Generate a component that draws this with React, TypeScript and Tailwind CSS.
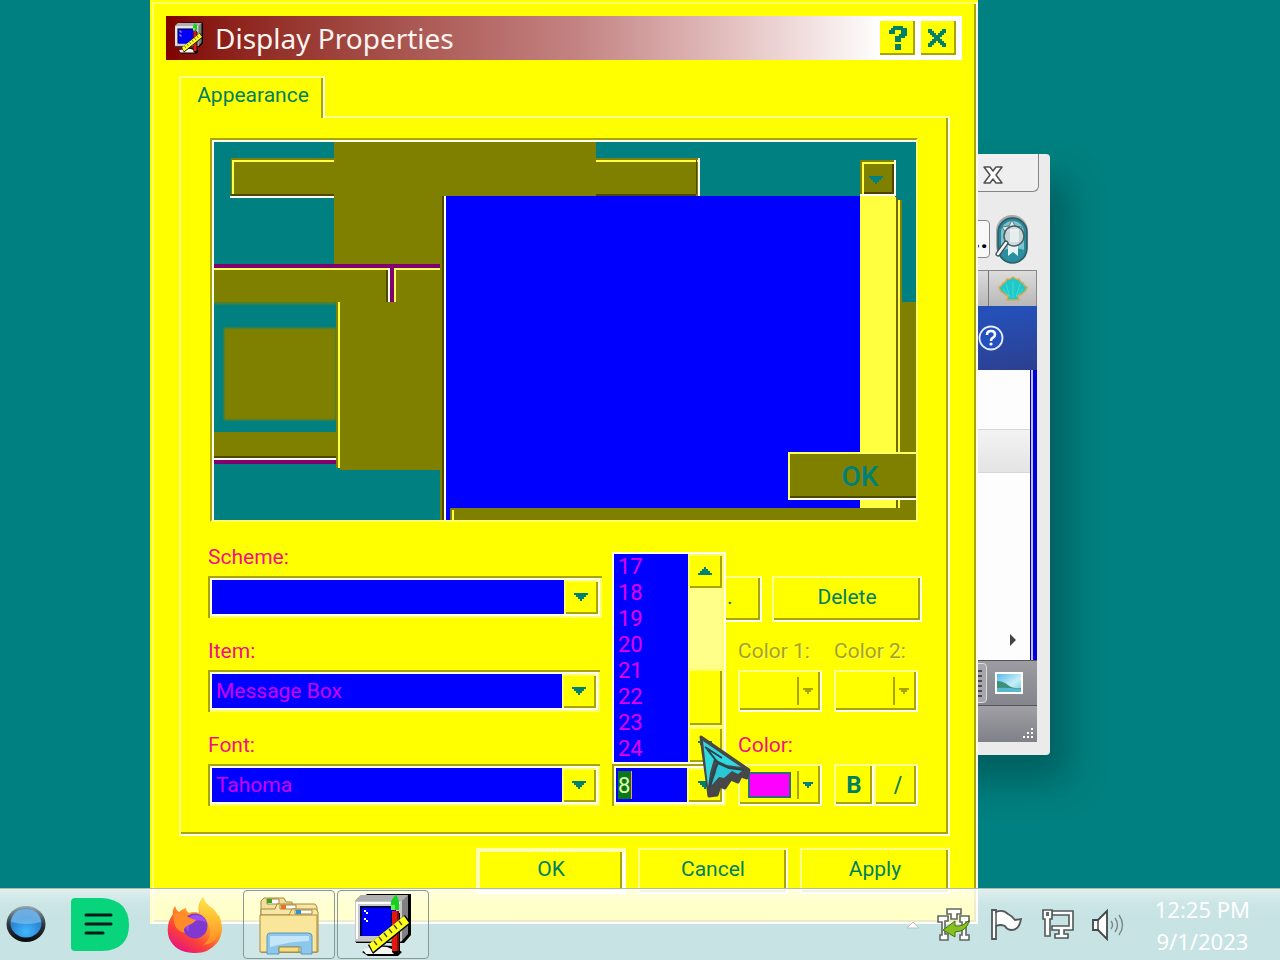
import React from "react";

const RAISED =
  "bg-[#ffff00] shadow-[inset_2px_2px_0_#ffff8c,inset_-2px_-2px_0_#fffff0,inset_-4px_-4px_0_#a8a400]";
const SUNKEN =
  "bg-[#ffff00] p-1 shadow-[inset_2px_2px_0_#a8a400,inset_-2px_-2px_0_#ffff66,inset_4px_4px_0_#fffff0,inset_-4px_-4px_0_#fffff0]";
const KNOB =
  "flex items-center justify-center bg-[#ffff00] shadow-[inset_2px_2px_0_#ffff66,inset_-2px_-2px_0_#a8a400]";
const LABEL = "block h-7 text-[21px] leading-[30px] text-[#f0108c]";

function Triangle({ up = false }: { up?: boolean }) {
  return (
    <svg width="14" height="8" viewBox="0 0 14 8" shapeRendering="crispEdges" aria-hidden="true">
      <path
        d={up ? "M6 0h2v2h2v2h2v2h2v2H0V6h2V4h2V2h2z" : "M0 0h14v2h-2v2h-2v2H8v2H6V6H4V4H2V2H0z"}
        fill="#008070"
      />
    </svg>
  );
}

function Combo({ id, label, value, list }: { id: string; label: string; value: string; list: string[] }) {
  return (
    <div className="min-w-0">
      <label htmlFor={id} className={LABEL}>
        {label}
      </label>
      <div className={`mt-[6px] flex h-[42px] ${SUNKEN}`}>
        <select
          id={id}
          defaultValue={value}
          className="h-full min-w-0 flex-1 appearance-none rounded-none bg-[#0000ff] pl-1 text-[21px] leading-8 text-[#d000ff] outline-none"
        >
          {list.map((o) => (
            <option key={o} value={o}>
              {o}
            </option>
          ))}
        </select>
        <span className={`w-[34px] ${KNOB}`}>
          <Triangle />
        </span>
      </div>
    </div>
  );
}

function ColorPick({ label, color }: { label: string; color?: string }) {
  const dim = !color;
  return (
    <div>
      <span
        className={`block h-7 text-[21px] leading-[30px] whitespace-nowrap ${
          dim ? "text-[#a8a400] [text-shadow:1px_1px_0_#ffff8c]" : "text-[#f0108c]"
        }`}
      >
        {label}
      </span>
      <button
        aria-label={label}
        disabled={dim}
        className={`mt-[6px] flex h-[42px] w-full items-center pr-[5px] pl-[10px] ${RAISED}`}
      >
        <span className={dim ? "h-[26px] flex-1" : "h-[26px] flex-1 border-2 border-[#2c6c7c] bg-[#ff00ff]"} />
        <span className="mr-1 ml-[6px] h-7 w-[2px] bg-[#a8a400]" />
        <svg width="10" height="6" viewBox="0 0 10 6" className="mr-1" aria-hidden="true">
          <path d="M0 0h10v2H8v2H6v2H4V4H2V2H0z" fill={dim ? "#a8a400" : "#008070"} />
        </svg>
      </button>
    </div>
  );
}

function MonitorIcon({ className }: { className: string }) {
  return (
    <svg className={className} viewBox="0 0 58 64" aria-hidden="true">
      <path d="M7 6l6-5h44v41l-7 8H2V8z" fill="#000" />
      <path d="M1 8l6-6h47v39l-7 8H1z" fill="#808080" />
      <path d="M1 8l6-6h47l-6 6z" fill="#b0b0b0" />
      <path d="M1 8h47v40H1z" fill="#c8c8c8" />
      <path d="M2 9h44v2H4v35H2z" fill="#fff" />
      <path d="M6 13h36v30H6z" fill="#000050" />
      <path d="M8 15h34v28H8z" fill="#0000f8" />
      <path d="M10 17h2v2h-2zM12 19h2v2h-2zM10 25h2v2h-2zM12 27h2v2h-2z" fill="#fff" />
      <path d="M12 57q10-6 26-4l10 6-4 4H14l-6-4z" fill="#000" />
      <path d="M9 57q10-5 24-3l12 5-4 2H12z" fill="#f4f4f4" />
      <path d="M37 20h9v38l-4 5-4-4z" fill="#000" />
      <path d="M38 18h7v40h-7z" fill="#e01810" />
      <path d="M43 18h2v40h-2z" fill="#801008" />
      <path d="M37 17V8l5-7 3 7v9z" fill="#18d020" />
      <path d="M37 12h4v5h-4z" fill="#68f050" />
      <path d="M19 61l-5-9 37-30 6 8z" fill="#000" />
      <path d="M19 59l-4-8 35-28 5 7z" fill="#ffff20" />
      <path d="M20 48l3 4M25 44l3 4M30 40l3 4M35 36l3 4M40 32l3 4M45 28l3 4" stroke="#504800" strokeWidth="1.4" />
    </svg>
  );
}

function Preview() {
  return (
    <svg
      viewBox="214 142 702 378"
      preserveAspectRatio="xMinYMin slice"
      className="block h-[378px] w-full"
      role="img"
      aria-label="Scheme preview"
    >
      <g shapeRendering="crispEdges">
        <path d="M214 142h702v378H214z" fill="#008080" />
        <path d="M231 158h468v38H231z" fill="#808000" />
        <path d="M232 160h466v2H234v32h-2z" fill="#ffff40" />
        <path d="M231 194h466v-34h-1v36H231z" fill="#504800" />
        <path d="M230 196h468v-38h2v40H230z" fill="#fffff0" />
        <path d="M334 142h262v54H444v324h-4V470H340V302H214V266h120z" fill="#808000" />
        <path d="M214 264h226v4H214z" fill="#800070" />
        <path d="M214 268h226v2H214z" fill="#ffff60" />
        <path d="M386 270h2v32h-2z" fill="#504800" />
        <path d="M388 268h2v34h-2z" fill="#fffff0" />
        <path d="M390 268h4v34h-4z" fill="#800070" />
        <path d="M394 268h2v34h-2z" fill="#ffff60" />
        <path d="M336 302h4v166h-4z" fill="#808000" />
        <path d="M214 432h122v24H214z" fill="#808000" />
        <path d="M214 456h122v2H214z" fill="#504800" />
        <path d="M214 458h122v2H214z" fill="#fffff0" />
        <path d="M214 460h122v4H214z" fill="#800070" />
        <path d="M338 302h2v166h-2z" fill="#ffff40" />
        <path d="M442 196h2v324h-2z" fill="#504800" />
        <path d="M444 196h2v324h-2z" fill="#fffff0" />
        <path d="M446 196h414v312h-408v12h-6z" fill="#0000ff" />
        <path d="M450 508h466v12H450z" fill="#808000" />
        <path d="M452 510h2v10h-2z" fill="#ffff40" />
        <path d="M898 200h4v308h-4zM902 302h14v218h-14z" fill="#808000" />
        <path d="M860 196h34l2 2v310h-36z" fill="#ffff40" />
        <path d="M896 198h2v310h-2z" fill="#706800" />
        <path d="M898 200h2v308h-2z" fill="#ffff40" />
        <path d="M860 160h35v36h-35z" fill="#808000" />
        <path d="M862 162h32v2h-30v30h-2z" fill="#ffff40" />
        <path d="M892 164h2v30h-30v-2h28z" fill="#504000" />
        <path d="M894 160h2v36h-36v-2h34z" fill="#fffff0" />
        <path d="M869 176h14v2h-2v2h-2v2h-2v2h-2v-2h-2v-2h-2v-2h-2z" fill="#008080" />
        <path d="M788 452h128v48H788z" fill="#808000" />
        <path d="M788 452h128v2H790v46h-2z" fill="#ffff60" />
        <path d="M790 496h126v2H790z" fill="#504800" />
        <path d="M788 498h128v2H788z" fill="#fffff0" />
      </g>
      <g filter="url(#soft)">
        <path d="M214 302h122v2H214zM224 328h112v92H224z" fill="#808000" />
      </g>
      <defs>
        <filter id="soft">
          <feGaussianBlur stdDeviation="1" />
        </filter>
      </defs>
      <text
        x="860"
        y="486"
        textAnchor="middle"
        fill="#008078"
        fontSize="28"
        fontWeight="500"
        fontFamily="Roboto, sans-serif"
      >
        OK
      </text>
    </svg>
  );
}

function BrowserWindow() {
  return (
    <section
      aria-label="Browser"
      className="absolute top-[154px] left-[650px] flex w-[400px] flex-col rounded-tr rounded-b-sm bg-[#ebebeb] pr-[13px] pb-[13px] shadow-[18px_26px_36px_rgba(0,50,50,0.42)]"
    >
      <div className="flex h-[38px] justify-end">
        <button
          aria-label="Close window"
          className="-mr-[2px] flex w-[90px] items-center justify-end rounded-br-md border-r border-b border-[#858585] bg-[#efefef] pt-1 pr-[35px]"
        >
          <svg width="20" height="18" viewBox="0 0 20 18" aria-hidden="true">
            <path
              d="M1 1h6l3 4 3-4h6l-6 8 6 8h-6l-3-4-3 4H1l6-8z"
              fill="#fff"
              stroke="#505050"
              strokeWidth="1.5"
              strokeLinejoin="round"
            />
          </svg>
        </button>
      </div>
      <div className="flex h-[78px] items-center justify-end gap-[5px] pt-4 pr-2">
        <div className="flex h-[38px] w-[80px] items-end justify-end rounded-r border border-[#888] bg-[#f8f8f8] pr-[1px] pb-[6px] text-[26px] leading-6 font-bold text-black">
          ...
        </div>
        <svg width="34" height="50" viewBox="0 0 34 50" aria-hidden="true">
          <rect x="1" y="1" width="32" height="46" rx="16" fill="#a8a8a8" />
          <rect x="3" y="4" width="29" height="45" rx="14.5" fill="#2b8797" stroke="#295b68" strokeWidth="1.5" />
          <rect x="6" y="7" width="23" height="39" rx="11.5" fill="#79c4ce" />
          <path d="M6 37q12-5 23-1-2 11-11 11-9-1-12-10z" fill="#2b8fa0" />
          <path d="M17 6l3 6 7 1-4 6H11l-4-6 7-1z" fill="#e0f0f0" stroke="#5d7780" />
          <path d="M13 27h10v15l-5-4-5 4z" fill="#e4f4f4" />
          <circle cx="19" cy="22" r="10" fill="#cdd8da" fillOpacity=".9" stroke="#4b5c62" strokeWidth="1.5" />
          <path d="M15 15h9v13h-9z" fill="#f4f6f6" fillOpacity=".7" />
          <path d="M11 29L3 40" stroke="#3e4c52" strokeWidth="5" strokeLinecap="round" />
          <path d="M11 29L3 40" stroke="#f4f4f4" strokeWidth="2.5" strokeLinecap="round" />
        </svg>
      </div>
      <div className="flex h-9 justify-end border-t border-r border-[#888] bg-linear-to-b from-[#dcdcdc] to-[#b8b8b8]">
        <div className="flex w-12 items-center justify-center border-l border-[#777]">
          <svg width="30" height="26" viewBox="0 0 30 26" aria-hidden="true">
            <path
              d="M9 24l1-4Q1 16 1 11q3-1 4-4 2 0 4-4 3 1 6-2 3 3 6 2 2 4 4 4 1 3 4 4 0 5-9 9l1 4z"
              fill="#20c8c8"
              stroke="#e0a850"
              strokeWidth="1.5"
            />
            <path d="M15 22V5M12 21L8 8M18 21l4-13M11 20l-6-7M19 20l6-7" stroke="#40dcd8" />
          </svg>
        </div>
      </div>
      <div className="flex h-[64px] items-center justify-end bg-linear-to-br from-[#1c3f9c] via-[#2450b8] to-[#2c3f90] pr-[33px]">
        <svg width="26" height="26" viewBox="0 0 26 26" aria-hidden="true">
          <circle cx="13" cy="13" r="11.5" fill="#2450c0" stroke="#e8ecff" strokeWidth="1.8" />
          <path d="M9 10q0-4 4-4t4 3.500q0 2-2 3.200-2 1-2 3.300" fill="none" stroke="#fff" strokeWidth="2.600" />
          <circle cx="13" cy="19" r="1.600" fill="#fff" />
        </svg>
      </div>
      <div className="flex h-[290px] flex-col border-r-4 border-[#0000d8] bg-[#fdfdfd]">
        <div className="flex h-full flex-col border-r-2 border-[#c0c0ff]">
          <div className="h-full border-r border-[#0000a0]">
            <div className="mt-[59px] h-11 border-y border-[#d8d8d8] bg-linear-to-b from-[#f3f3f3] to-[#e4e4e4]" />
            <div className="flex justify-end pt-[161px] pr-[14px]">
              <svg width="6" height="12" viewBox="0 0 6 12" aria-hidden="true">
                <path d="M0 0l6 6-6 6z" fill="#444" />
              </svg>
            </div>
          </div>
        </div>
      </div>
      <div className="flex h-[46px] items-center justify-end gap-2 border-y border-[#555] bg-linear-to-b from-[#9c9ca2] to-[#85858d] pr-[14px]">
        <div className="flex h-10 w-5 flex-col justify-center gap-[3px] rounded-r border border-[#ddd] bg-[#a6a6ab] pr-1">
          {[0, 1, 2, 3, 4, 5].map((n) => (
            <span key={n} className="h-[2px] bg-[#4a4a50]" />
          ))}
        </div>
        <svg width="28" height="22" viewBox="0 0 28 22" aria-hidden="true">
          <defs>
            <linearGradient id="sky" x1="0" y1="0" x2="1" y2="1">
              <stop offset="0" stopColor="#58b8ec" />
              <stop offset="0.6" stopColor="#c8f0f8" />
              <stop offset="1" stopColor="#70c8d8" />
            </linearGradient>
          </defs>
          <path d="M0 0h28v22H0z" fill="#fff" />
          <path d="M2 2h24v18H2z" fill="url(#sky)" />
          <path d="M2 9q6 0 11 4t13 3v1H2z" fill="#3c9078" />
          <path d="M2 16q8-1 24 1v3H2z" fill="#58b8d0" />
        </svg>
      </div>
      <div className="flex h-9 items-end justify-end bg-linear-to-b from-[#a0a0a6] to-[#808088] p-[3px]">
        <svg width="12" height="12" viewBox="0 0 12 12" fill="#fff" aria-hidden="true">
          <path d="M9 1h2v2H9zM9 5h2v2H9zM5 5h2v2H5zM9 9h2v2H9zM5 9h2v2H5zM1 9h2v2H1z" />
        </svg>
      </div>
    </section>
  );
}

function SizeField() {
  return (
    <div className="relative flex flex-col justify-end">
      <div className={`flex h-[42px] ${SUNKEN}`}>
        <div className="flex min-w-0 flex-1 items-center bg-[#0000ff] pl-[2px]">
          <input
            aria-label="Size"
            defaultValue="8"
            className="h-7 w-[14px] border-r border-[#ff9090] bg-[#087818] text-[22px] text-[#e0ffb0] outline-none"
          />
        </div>
        <button aria-label="Show sizes" className={`w-[35px] ${KNOB}`}>
          <Triangle />
        </button>
      </div>
      <div className="absolute bottom-[42px] left-0 z-10 flex w-full border-2 border-[#fffff0] bg-[#ffff00]">
        <ul className="flex-1 bg-[#0000ff] pl-1 text-[22px] leading-[26px] text-[#e000f4]">
          {[17, 18, 19, 20, 21, 22, 23, 24].map((n) => (
            <li key={n}>{n}</li>
          ))}
        </ul>
        <div className="flex w-9 flex-col border-r-2 border-[#ffff66] bg-[#ffff8a]">
          <button aria-label="Scroll up" className={`h-[34px] ${KNOB}`}>
            <Triangle up />
          </button>
          <div className="flex-1" />
          <div className={`h-[56px] ${KNOB}`} />
          <button aria-label="Scroll down" className={`mt-[2px] h-[35px] ${KNOB}`}>
            <Triangle />
          </button>
        </div>
      </div>
      <svg
        width="54"
        height="64"
        viewBox="0 0 54 64"
        className="pointer-events-none absolute bottom-[7px] left-[87px] z-20"
        aria-hidden="true"
      >
        <path
          d="M2 2l48 33-2 8-6-2-3 6-7-3-6 9-5-2-3 9-8 1z"
          fill="#48484a"
          stroke="#484848"
          strokeWidth="3"
          strokeLinejoin="round"
        />
        <path d="M4 6l38 26-14-2-13-6-4 14-2 14z" fill="#30d8e0" />
        <path d="M18 28l11 5 15 2-5 4-6-3-8 7-5-1-8 9 5-14z" fill="#28c8d4" />
        <path d="M8 14l11 14-5 11-3 13M19 28l11 5 15 2M6 12l17 11" fill="none" stroke="#2c4448" strokeWidth="2" />
      </svg>
    </div>
  );
}

function DisplayDialog() {
  return (
    <section
      aria-label="Display Properties"
      className="absolute top-0 left-[150px] w-[828px] bg-[#ffff00] p-4 pb-[30px] shadow-[inset_2px_2px_0_#ffff00,inset_-2px_-2px_0_#fffff0,inset_4px_4px_0_#ffff66,inset_-4px_-4px_0_#a8a400]"
    >
      <header className="flex h-11 items-center bg-linear-to-r from-[#800000] via-[#c48484] via-52% to-white to-90% pr-[6px] pl-2">
        <MonitorIcon className="h-8 w-[30px]" />
        <h1 className="ml-[11px] flex-1 font-['Noto_Sans',sans-serif] text-[28px] leading-10 text-[#fff4f0]">
          Display Properties
        </h1>
        <button
          aria-label="Help"
          className="mr-[6px] flex h-[34px] w-[35px] items-center justify-center bg-[#ffff00] shadow-[inset_-2px_-2px_0_#a8a400]"
        >
          <svg width="18" height="24" viewBox="0 0 18 24" shapeRendering="crispEdges" aria-hidden="true">
            <path d="M4 0h10v2h4v8h-2v2h-4v4H6v-6h4V8h2V4H6v4H0V4h2V2h2zM6 18h6v6H6z" fill="#008068" />
          </svg>
        </button>
        <button
          aria-label="Close"
          className="flex h-[34px] w-[35px] items-center justify-center bg-[#ffff00] pr-1 shadow-[inset_-2px_-2px_0_#a8a400]"
        >
          <svg width="18" height="18" viewBox="0 0 18 18" shapeRendering="crispEdges" aria-hidden="true">
            <path
              d="M0 0h4v2h2v2h2v2h2V4h2V2h2V0h4v4h-2v2h-2v2h-2v2h2v2h2v2h2v4h-4v-2h-2v-2h-2v-2H8v2H6v2H4v2H0v-4h2v-2h2v-2h2V8H4V6H2V4H0z"
              fill="#008068"
            />
          </svg>
        </button>
      </header>

      <div className="mt-4 mr-3 ml-[13px]">
        <button
          role="tab"
          aria-selected="true"
          className="relative -mb-[2px] block h-[42px] w-[146px] border-t-2 border-l-2 border-[#ffff8c] bg-[#ffff00] pb-1 text-[21px] text-[#008060] shadow-[inset_-2px_0_0_#fffff0,inset_-4px_0_0_#a8a400]"
        >
          Appearance
        </button>
        <div
          role="tabpanel"
          className="pt-[22px] pr-7 pb-[30px] pl-[29px] shadow-[inset_2px_2px_0_#ffff8c,inset_-2px_-2px_0_#fffff0,inset_-4px_-4px_0_#a8a400]"
        >
          <div className="mr-1 ml-[2px] border-2 border-[#a8a400] border-r-[#ffff66] border-b-[#ffff66]">
            <div className="border-t-2 border-l-2 border-[#fffff0]">
              <Preview />
            </div>
          </div>

          <div className="mt-5 flex items-end gap-[10px]">
            <div className="min-w-0 flex-1">
              <Combo id="scheme" label="Scheme:" value="" list={["", "Windows Standard"]} />
            </div>
            <button className={`-mb-1 h-[46px] w-[150px] pb-[2px] text-[21px] text-[#008060] ${RAISED}`}>
              Save As...
            </button>
            <button className={`-mb-1 h-[46px] w-[150px] pb-[2px] text-[21px] text-[#008060] ${RAISED}`}>
              Delete
            </button>
          </div>

          <div className="mt-[18px] mr-1 grid grid-cols-[1fr_114px_84px_84px] gap-x-3 gap-y-[18px]">
            <Combo id="item" label="Item:" value="Message Box" list={["Message Box", "Desktop"]} />
            <div />
            <ColorPick label="Color 1:" />
            <ColorPick label="Color 2:" />
            <Combo id="font" label="Font:" value="Tahoma" list={["Tahoma", "Arial"]} />
            <SizeField />
            <ColorPick label="Color:" color="#ff00ff" />
            <div className="flex items-end">
              <button aria-label="Bold" className={`h-[42px] flex-1 text-2xl font-bold text-[#008060] ${RAISED}`}>
                B
              </button>
              <button
                aria-label="Italic"
                className={`flex h-[42px] flex-1 items-center justify-center pl-1 ${RAISED}`}
              >
                <svg width="10" height="20" viewBox="0 0 10 20" aria-hidden="true">
                  <path d="M8 1L2 19" stroke="#208050" strokeWidth="2" />
                </svg>
              </button>
            </div>
          </div>
        </div>

        <div className="mt-3 flex justify-end gap-3 text-[21px] text-[#008060]">
          <button className="h-[46px] w-[150px] bg-[#ffff00] pb-[2px] shadow-[inset_4px_4px_0_#ffffb0,inset_-4px_-4px_0_#fffff0,inset_-6px_-6px_0_#a8a400]">
            OK
          </button>
          <button className={`h-[46px] w-[150px] pb-[2px] ${RAISED}`}>Cancel</button>
          <button className={`h-[46px] w-[150px] pb-[2px] ${RAISED}`}>Apply</button>
        </div>
      </div>
    </section>
  );
}

function Firefox() {
  return (
    <svg width="58" height="58" viewBox="0 0 58 58" aria-hidden="true">
      <defs>
        <linearGradient id="fx" x1="0.8" y1="0.1" x2="0.25" y2="0.95">
          <stop offset="0" stopColor="#ffe040" />
          <stop offset="0.4" stopColor="#ff9428" />
          <stop offset="0.72" stopColor="#fb4338" />
          <stop offset="1" stopColor="#e81878" />
        </linearGradient>
        <linearGradient id="fy" x1="0.5" y1="0" x2="0.5" y2="1">
          <stop offset="0" stopColor="#ffe848" />
          <stop offset="1" stopColor="#ff8a20" />
        </linearGradient>
      </defs>
      <path
        d="M9 10q1 4 4 6 3-3 7-4 0 3 3 5 5-2 10 0-2-9 4-16 2 7 9 11 4 3 5 8l2-1q7 16-2 28-9 11-24 10Q9 56 3 42q-4-13 4-24-1-4 2-8z"
        fill="url(#fx)"
      />
      <path d="M37 1q2 7 9 11 10 8 8 22-4 14-17 15 10-7 6-19-2-7-8-11-4-8 2-18z" fill="url(#fy)" />
      <circle cx="29" cy="30" r="12.500" fill="#8038d0" />
      <path d="M20 24q8-8 17-3l4 6q-8-5-14-1-6 3-4 10-6-6-3-12z" fill="#a050f0" />
      <path d="M8 18q6-2 12 1 2 3 10 5-3 4-8 5-6 3-3 8Q6 34 8 18z" fill="#ff8c28" />
    </svg>
  );
}

function Folder() {
  return (
    <svg width="60" height="60" viewBox="0 0 60 60" stroke="#a88838" strokeWidth="1" aria-hidden="true">
      <path d="M2 56V6l3-3h20l2 4h6v49z" fill="#f0e0a0" />
      <path d="M8 4h12v5H8z" fill="#fff" />
      <path d="M8 4h5v4H8z" fill="#40a020" stroke="none" />
      <path d="M2 57V14h14l2-5h38l2 3v45z" fill="#f6e6a8" />
      <path d="M21 10h16v4H21z" fill="#fff" />
      <path d="M22 10h5v4h-5z" fill="#f07020" stroke="none" />
      <path d="M2 57V20h28l3-6h24l2 3v40z" fill="#f8e8a4" />
      <path d="M36 15h17v4H36z" fill="#fff" />
      <path d="M37 15h5v4h-5z" fill="#3090e0" stroke="none" />
      <path d="M1 57V20h57v37z" fill="#fae69a" />
      <path d="M8 59V41q0-3 3-3h38q4 0 4 3v18H42V52H20v7z" fill="#8cc8ec" stroke="#5c98c0" />
      <path d="M11 41h39v5q-18 0-39 6z" fill="#c4e6f8" stroke="none" />
      <path d="M20 52h20v5H20z" fill="#f4dc80" />
    </svg>
  );
}

function Taskbar() {
  return (
    <footer className="absolute inset-x-0 bottom-0 z-30 flex h-[72px] items-center border-t border-[#b0bcae] bg-linear-to-b from-white/88 from-0% via-white/80 via-20% to-white/78 to-40%">
      <button aria-label="Start" className="ml-[6px]">
        <svg width="42" height="42" viewBox="0 0 42 42" aria-hidden="true">
          <defs>
            <radialGradient id="orb" cx="0.5" cy="0.8" r="0.8">
              <stop offset="0" stopColor="#40b8ff" />
              <stop offset="0.6" stopColor="#2c86d4" />
              <stop offset="1" stopColor="#4890cc" />
            </radialGradient>
            <linearGradient id="rim" x1="0" y1="0" x2="0" y2="1">
              <stop offset="0" stopColor="#98a8b0" />
              <stop offset="0.5" stopColor="#303840" />
              <stop offset="1" stopColor="#080c10" />
            </linearGradient>
          </defs>
          <ellipse cx="20" cy="20" rx="19.500" ry="18" fill="url(#rim)" />
          <ellipse cx="20" cy="19" rx="15.500" ry="14.500" fill="url(#orb)" />
          <path d="M5 18Q7 5 20 5t15 13q-14 4-30 0z" fill="#9cd0f4" fillOpacity=".5" />
        </svg>
      </button>
      <button aria-label="Documents" className="ml-[23px]">
        <svg width="60" height="56" viewBox="0 0 60 56" aria-hidden="true">
          <path d="M4 1h27q27 2 27 27T31 54H4q-4 0-4-4V5q0-4 4-4z" fill="#08d47c" />
          <path d="M15 18h25M15 27h25M15 36h17" stroke="#101c18" strokeWidth="3" strokeLinecap="round" />
        </svg>
      </button>
      <button aria-label="Firefox" className="ml-[35px]">
        <Firefox />
      </button>
      <button
        aria-label="File Explorer"
        className="ml-[19px] flex h-[69px] w-[92px] items-center justify-center rounded border border-[#8c9898] bg-white/15"
      >
        <Folder />
      </button>
      <button
        aria-label="Display Properties"
        className="ml-[2px] flex h-[69px] w-[92px] items-center justify-center rounded border border-[#8c9898] bg-white/15"
      >
        <MonitorIcon className="h-[64px] w-[58px]" />
      </button>

      <div className="ml-auto flex items-center gap-[17px] pr-[30px]">
        <svg width="14" height="8" viewBox="0 0 14 8" aria-hidden="true">
          <path d="M1 7l6-6 6 6z" fill="#fff" stroke="#b8c4c4" />
        </svg>
        <svg width="34" height="34" viewBox="0 0 34 34" aria-hidden="true">
          <path
            d="M10 1h14v5h-4v5h-6V6h-4zM1 8h10v5H8v13h3v6H3v-5h2V14H1zM23 8h9v6h-3v13h3v5h-9v-5h2V14h-2z"
            fill="#fff"
            stroke="#606860"
            strokeWidth="1.600"
          />
          <path d="M6 22l12-9v5q8 1 14-6-1 11-14 12v5z" fill="#88c020" stroke="#487010" />
        </svg>
        <svg width="36" height="34" viewBox="-2 0 36 34" aria-hidden="true">
          <path
            d="M2 2h4v2q7-3 12 2 4 2 7 6l6-1q-2 11-9 11-5 0-7-4-5-2-9 0v13H2z"
            fill="#fff"
            stroke="#505858"
            strokeWidth="1.800"
          />
          <path d="M6 4v14" stroke="#505858" strokeWidth="1.500" />
        </svg>
        <svg width="34" height="34" viewBox="0 0 34 34" aria-hidden="true">
          <path
            d="M11 3h21v19h-9v4h4v4H14v-4h4v-4h-7v-4h17V7H11z"
            fill="#fff"
            stroke="#505858"
            strokeWidth="1.600"
          />
          <path d="M2 2h9v9H9v17H4V11H2z" fill="#fff" stroke="#505858" strokeWidth="1.600" />
          <path d="M5 4h3v4H5z" fill="#606868" />
        </svg>
        <svg width="34" height="34" viewBox="0 0 34 34" aria-hidden="true">
          <path d="M1 12h5l9-9v28l-9-9H1z" fill="#fff" stroke="#404848" strokeWidth="1.800" />
          <path d="M6 12v10" stroke="#404848" strokeWidth="1.500" />
          <path d="M19 13q3 4 0 8M23 10q5 7 0 14M27 7q7 10 0 20" fill="none" stroke="#78888a" strokeWidth="1.400" />
        </svg>
        <div className="ml-3 text-center font-['Noto_Sans',sans-serif] text-[22px] leading-8 whitespace-nowrap text-white">
          <div>12:25 PM</div>
          <div>9/1/2023</div>
        </div>
      </div>
    </footer>
  );
}

export default function App() {
  return (
    <main className="relative h-screen min-h-[640px] overflow-hidden bg-[#008080] font-[Roboto,sans-serif]">
      <BrowserWindow />
      <DisplayDialog />
      <Taskbar />
    </main>
  );
}
